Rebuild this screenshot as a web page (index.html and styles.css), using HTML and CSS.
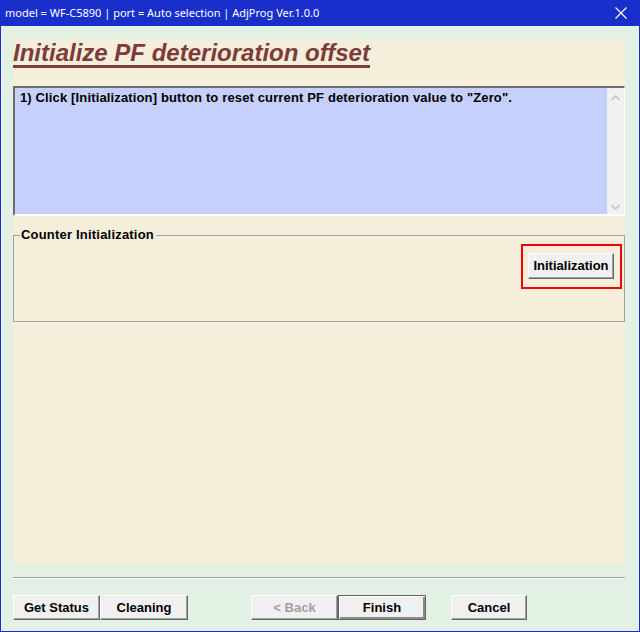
FILE: index.html
```html
<!DOCTYPE html>
<html>
<head>
<meta charset="utf-8">
<link rel="stylesheet" href="styles.css">
</head>
<body>
<div class="window">
  <div class="titlebar">
    <span class="title-text">model = WF-C5890 | port = Auto selection | AdjProg Ver.1.0.0</span>
    <svg class="close" width="12" height="12" viewBox="0 0 12 12"><path d="M0.5 0.5 L11.5 11.5 M11.5 0.5 L0.5 11.5" stroke="#fff" stroke-width="1.2" fill="none"/></svg>
  </div>
  <div class="content">
    <div class="panel">
      <div class="heading"><span class="heading-text">Initialize PF deterioration offset</span></div>
      <div class="textbox">
        <div class="textbox-text">1) Click [Initialization] button to reset current PF deterioration value to "Zero".</div>
        <div class="scrollbar">
          <svg width="9" height="6" viewBox="0 0 9 6"><path d="M0.5 5 L4.5 1 L8.5 5" stroke="#c0c0c0" stroke-width="1.5" fill="none"/></svg>
          <svg width="9" height="6" viewBox="0 0 9 6"><path d="M0.5 1 L4.5 5 L8.5 1" stroke="#c0c0c0" stroke-width="1.5" fill="none"/></svg>
        </div>
      </div>
      <fieldset class="group">
        <legend class="group-legend">Counter Initialization</legend>
        <div class="group-body">
          <div class="highlight">
            <button class="btn btn-init">Initialization</button>
          </div>
        </div>
      </fieldset>
    </div>
    <div class="separator"></div>
    <div class="footer">
      <button class="btn btn-status">Get Status</button>
      <button class="btn btn-clean">Cleaning</button>
      <button class="btn btn-back" disabled>&lt; Back</button>
      <button class="btn btn-finish">Finish</button>
      <button class="btn btn-cancel">Cancel</button>
    </div>
  </div>
</div>
</body>
</html>
```

FILE: styles.css
```css
html, body {
  margin: 0;
  padding: 0;
}
body {
  width: 640px;
  height: 632px;
  overflow: hidden;
  font-family: "Liberation Sans", Arial, sans-serif;
}
.window {
  width: 640px;
  height: 632px;
  box-sizing: border-box;
  border: 1px solid #1b2fcc;
  border-top: none;
  display: flex;
  flex-direction: column;
  background: #e2f1e3;
}
.titlebar {
  height: 26px;
  margin: 0 -1px;
  background: #1a2ecb;
  color: #fff;
  display: flex;
  align-items: center;
  justify-content: space-between;
  padding: 0 13px 0 5px;
  font-family: "Noto Sans", "Open Sans", sans-serif;
  font-size: 11px;
  flex: none;
}
.title-text {
  line-height: 26px;
}
.close {
  display: block;
}
.content {
  flex: 1;
  padding: 13px 14px 0 12px;
  display: flex;
  flex-direction: column;
}
.panel {
  background: #f4eedb;
  height: 525px;
  display: flex;
  flex-direction: column;
}
.heading {
  height: 47px;
  box-sizing: border-box;
  padding-top: 1px;
}
.heading-text {
  display: inline-block;
  font-size: 24px;
  font-weight: bold;
  font-style: italic;
  color: #7d3b3a;
  line-height: 25px;
  border-bottom: 3px solid #7d3b3a;
  padding-bottom: 0px;
}
.textbox {
  height: 130px;
  box-sizing: border-box;
  border-top: 2px solid #6d6d6d;
  border-left: 2px solid #6d6d6d;
  border-right: 1px solid #fff;
  border-bottom: 2px solid #fff;
  background: #c6d0fc;
  display: flex;
}
.textbox-text {
  flex: 1;
  font-size: 13px;
  font-weight: bold;
  letter-spacing: 0.14px;
  color: #000;
  padding: 2px 0 0 5px;
  line-height: 16px;
}
.scrollbar {
  width: 17px;
  background: #f0f0f0;
  display: flex;
  flex-direction: column;
  justify-content: space-between;
  align-items: center;
  padding: 7px 0 4px;
}
.group {
  margin: 12px 0 0 0;
  padding: 0 2px 0 0;
  border: 1px solid #a0a0a0;
  height: 94px;
  box-sizing: border-box;
  min-width: 0;
}
.group-legend {
  margin-left: 6px;
  padding: 0 2px 0 1px;
  font-size: 13px;
  font-weight: bold;
  letter-spacing: 0.2px;
  line-height: 14px;
  color: #000;
}
.group-body {
  display: flex;
  justify-content: flex-end;
  padding-top: 2px;
}
.highlight {
  border: 2px solid #f00000;
  padding: 7px 6px 8px 5px;
}
.btn {
  font-family: "Liberation Sans", Arial, sans-serif;
  font-size: 13px;
  font-weight: bold;
  color: #000;
  background: #f0f0f0;
  border: 1px solid;
  border-color: #fff #696969 #696969 #fff;
  box-shadow: inset -1px -1px 0 #a0a0a0;
  height: 25px;
  padding: 0 0 1px;
  margin: 0;
  box-sizing: border-box;
}
.btn-init {
  width: 86px;
  height: 26px;
}
.separator {
  margin-top: 13px;
  height: 1px;
  background: #a0a0a0;
  border-bottom: 1px solid #fff;
}
.footer {
  display: flex;
  margin-top: 16px;
}
.btn-status { width: 87px; }
.btn-clean { width: 88px; }
.btn-back { width: 87px; margin-left: 63px; color: #a0a0a0; }
.btn-finish {
  width: 88px;
  border: 1px solid #646464;
  box-shadow: inset 1px 1px 0 #fff, inset -2px -2px 0 #8a8a8a;
}
.btn-cancel { width: 76px; margin-left: 25px; }
```
